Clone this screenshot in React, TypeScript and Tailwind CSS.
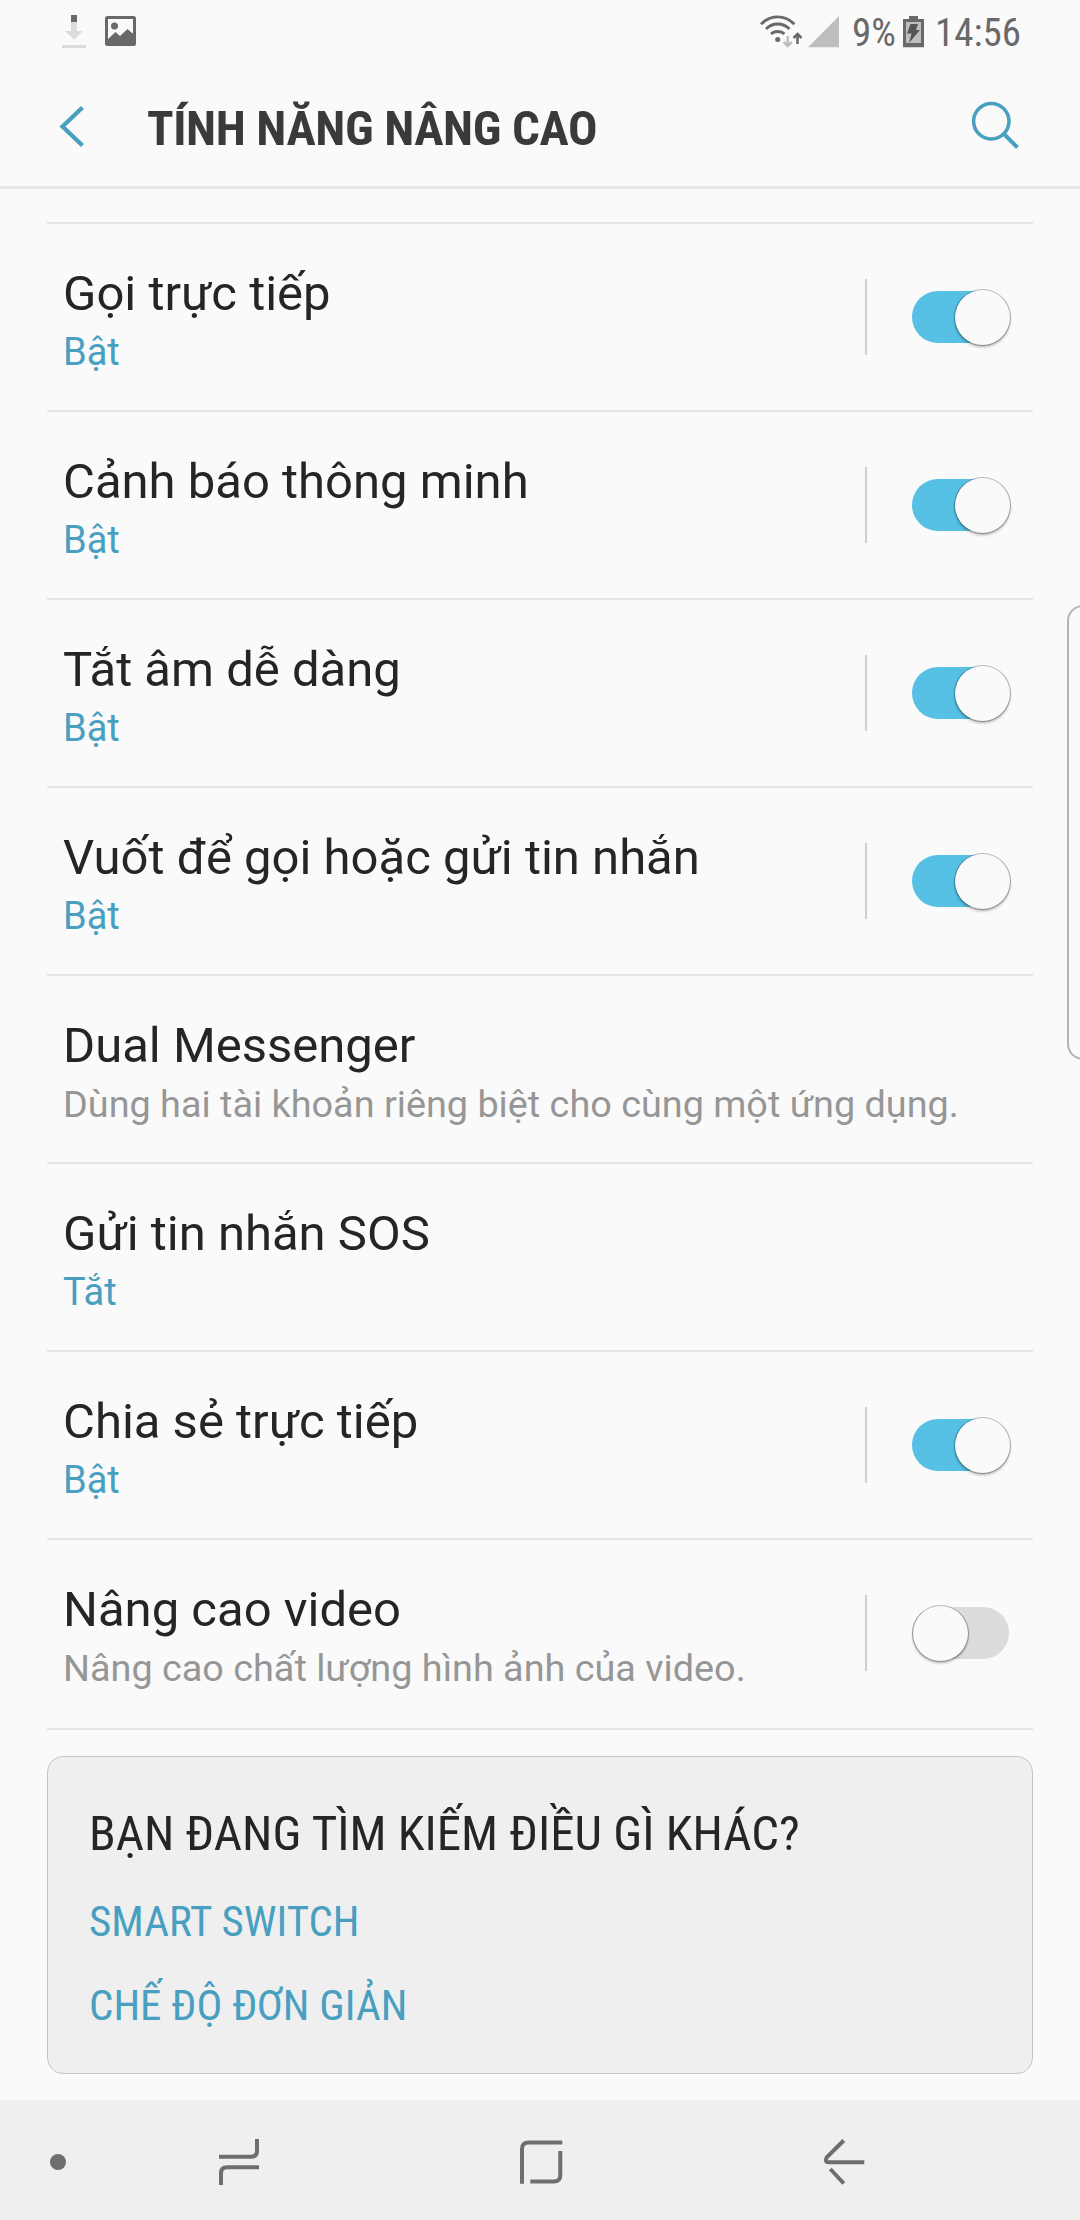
import type { ReactNode } from "react";

type Item = { title: string; sub: string; muted?: boolean; on?: boolean; toggle?: boolean };

const items: Item[] = [
  { title: "Gọi trực tiếp", sub: "Bật", toggle: true, on: true },
  { title: "Cảnh báo thông minh", sub: "Bật", toggle: true, on: true },
  { title: "Tắt âm dễ dàng", sub: "Bật", toggle: true, on: true },
  { title: "Vuốt để gọi hoặc gửi tin nhắn", sub: "Bật", toggle: true, on: true },
  { title: "Dual Messenger", sub: "Dùng hai tài khoản riêng biệt cho cùng một ứng dụng.", muted: true },
  { title: "Gửi tin nhắn SOS", sub: "Tắt" },
  { title: "Chia sẻ trực tiếp", sub: "Bật", toggle: true, on: true },
  { title: "Nâng cao video", sub: "Nâng cao chất lượng hình ảnh của video.", muted: true, toggle: true, on: false },
];

function Condensed({ className = "", children }: { className?: string; children: ReactNode }) {
  return (
    <span className={`block whitespace-nowrap font-['Roboto_Condensed','Roboto',sans-serif] [font-stretch:75%] ${className}`}>
      {children}
    </span>
  );
}

function Toggle({ on }: { on?: boolean }) {
  return (
    <div className={`relative mt-0.5 mb-0.5 h-[52px] w-[97px] rounded-full ${on ? "bg-[#57c0e5]" : "bg-[#dcdcdc]"}`}>
      <div
        className={`absolute -top-[1.5px] size-[55px] rounded-full bg-[#fafafa] shadow-[0_0_0_1px_rgba(0,0,0,0.25),0_2px_3px_rgba(0,0,0,0.3)] ${
          on ? "left-[42.5px]" : "left-[0.5px]"
        }`}
      />
    </div>
  );
}

function Row({ item, last }: { item: Item; last: boolean }) {
  return (
    <div className={`flex border-b-2 border-[#e5e5e5] pl-4 ${last ? "h-[190px]" : "h-[188px]"}`}>
      <div className="flex-1 whitespace-nowrap pt-10">
        <div className="text-[49px] leading-[60px] text-[#252525]">{item.title}</div>
        <div
          className={`mt-1 leading-[48px] ${
            item.muted ? "text-[37.8px] text-[#969696]" : "text-[38px] text-[#489fc0]"
          }`}
        >
          {item.sub}
        </div>
      </div>
      {item.toggle && (
        <div className="mt-[55px] flex h-[76px] items-center border-l-2 border-[#d0d0d0] pr-6 pl-[45px]">
          <Toggle on={item.on} />
        </div>
      )}
    </div>
  );
}

function StatusBar() {
  return (
    <div className="flex h-[72px] items-start text-[#696969]">
      <svg className="ml-[60px] h-[60px] w-[28px]" viewBox="60 0 28 60">
        <path d="M71 22h6v9h6l-9 8.500-9-8.500h6zM62 45h24v3H62z" fill="#dcdcdc" />
        <path d="M71 15h6v7h-6z" fill="#696969" />
      </svg>
      <svg className="ml-[15px] h-[60px] w-[36px]" viewBox="103 0 36 60">
        <rect x="106.5" y="17.5" width="28" height="27" rx="1" fill="none" stroke="#696969" strokeWidth="3" />
        <circle cx="114.500" cy="26" r="3.500" fill="#696969" />
        <path d="M107 40l8.500-8 4.500 4 7.500-7 7 6v10h-27.500z" fill="#696969" />
      </svg>
      <div className="flex-1" />
      <svg className="h-[60px] w-[84px]" viewBox="758 0 84 60">
        <g fill="none" stroke="#696969" strokeWidth="2.800">
          <path d="M761 24.300q7-7.500 16.700-7.500t16.700 7.500" />
          <path d="M766 29q5-5 11.700-5t11.700 5" />
          <path d="M771 34q2.500-2.500 6.700-2.500t6.700 2.500" />
          <path d="M797.500 44v-9M793.500 38l4-4 4 4" strokeWidth="2.500" />
          <path d="M787.700 36v9M783.700 42l4 4 4-4" stroke="#bebebe" strokeWidth="2.500" />
        </g>
        <circle cx="777.700" cy="39.400" r="2.500" fill="#696969" />
        <path d="M808 47.300L839 16v31.300z" fill="#bebebe" />
      </svg>
      <Condensed className="mt-[9px] ml-[10px] w-[50px] text-[39px] leading-[48px]">9%</Condensed>
      <svg className="h-[60px] w-[24px]" viewBox="902 0 24 60">
        <path d="M909 16h9v3h6v28.300h-21V19h6z" fill="#696969" />
        <path d="M906 22h15v21h-15z" fill="#bebebe" />
        <path d="M910.500 24h7.500l-2 6h4l-11 13 2.500-9.500h-4.500z" fill="#555" />
      </svg>
      <Condensed className="mt-[9px] ml-[9px] w-[145px] text-[39px] leading-[48px]">14:56</Condensed>
    </div>
  );
}

function Header() {
  return (
    <div className="flex h-[117px] border-b-[3px] border-[#e7e7e7]">
      <svg className="ml-[58px] h-[110px] w-[30px]" viewBox="58 72 30 110">
        <path d="M82.500 107.500L62.500 126.500l20 19" fill="none" stroke="#489fc0" strokeWidth="4.300" />
      </svg>
      <Condensed className="mt-[27px] ml-[59px] flex-1 text-[49px] leading-[60px] font-bold tracking-[-0.37px] text-[#3a3a3a]">
        TÍNH NĂNG NÂNG CAO
      </Condensed>
      <svg className="mr-[58px] h-[110px] w-[52px]" viewBox="970 72 52 110">
        <g fill="none" stroke="#489fc0" strokeWidth="3.500">
          <circle cx="991.300" cy="121.300" r="17.700" />
          <path d="M1003.500 133.500l14 14" strokeWidth="4" />
        </g>
      </svg>
    </div>
  );
}

function NavBar() {
  return (
    <div className="flex h-[120px] items-center bg-[#efefef] pt-1">
      <div className="ml-[50px] size-4 rounded-full bg-[#6e6e6e]" />
      <svg className="ml-[153px] h-[46px] w-10" viewBox="0 0 40 46" fill="none" stroke="#6e6e6e" strokeWidth="4">
        <path d="M0 17.700h32q6 0 6-6V0M40 28.300H8q-6 0-6 6V46" />
      </svg>
      <svg className="ml-[261px] h-[44px] w-[43px]" viewBox="0 0 43 44" fill="none" stroke="#6e6e6e" strokeWidth="4">
        <path d="M2 43.700V9q0-6.500 6.500-6.500H42.300M40.300 11v24q0 6.500-6.500 6.500H10.300" />
      </svg>
      <svg className="ml-[260px] h-[46px] w-[42px]" viewBox="823 2139 42 46" fill="none" stroke="#6e6e6e" strokeWidth="4">
        <path d="M843.700 2140.500l-17.200 17.200q-1.800 4.500 2 4.500H864.300M830.300 2169l13.500 14.500" />
      </svg>
    </div>
  );
}

export default function App() {
  return (
    <div className="relative flex h-[2220px] w-[1080px] flex-col overflow-hidden bg-[#fafafa] font-['Roboto',sans-serif]">
      <StatusBar />
      <Header />
      <div className="mx-[47px] mt-[33px] flex-1">
        <div className="border-t-2 border-[#e5e5e5]">
          {items.map((item, i) => (
            <Row key={item.title} item={item} last={i === items.length - 1} />
          ))}
        </div>
        <div className="mt-[26px] h-[318px] rounded-2xl border border-[#c6c6c6] bg-[#efefef] pt-[47px] pl-[41px]">
          <Condensed className="text-[49px] leading-[60px] text-[#252525]">BẠN ĐANG TÌM KIẾM ĐIỀU GÌ KHÁC?</Condensed>
          <Condensed className="mt-[27px] text-[43px] leading-[60px] text-[#489fc0]">SMART SWITCH</Condensed>
          <Condensed className="mt-[24px] text-[43px] leading-[60px] text-[#489fc0]">CHẾ ĐỘ ĐƠN GIẢN</Condensed>
        </div>
      </div>
      <NavBar />
      <div className="absolute top-[605px] -right-6 h-[455px] w-[37px] rounded-2xl border-2 border-[#b4b4b4]" />
    </div>
  );
}
